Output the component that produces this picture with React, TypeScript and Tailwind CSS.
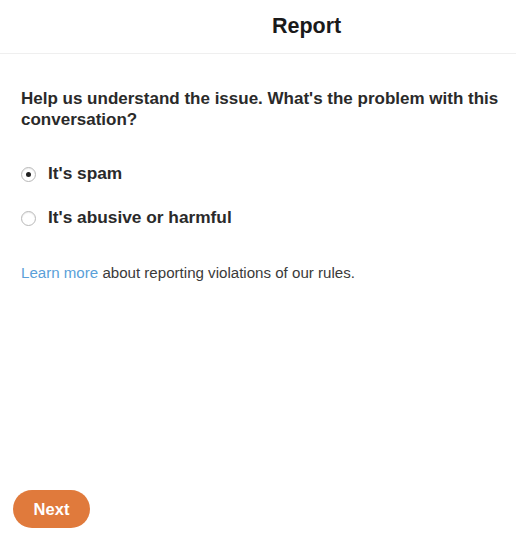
import { useState } from "react";

const options = [
    { id: "spam", label: "It's spam" },
    { id: "abusive", label: "It's abusive or harmful" },
];

export default function App() {
    const [selected, setSelected] = useState("spam");

    return (
        <div className="w-[516px] h-[540px] bg-white flex flex-col text-[#222] font-['Liberation_Sans',Arial,sans-serif]">
            <div className="h-[54px] border-b border-[#efefef] flex items-center pl-[272px]">
                <h1 className="text-[21.5px] font-bold leading-none text-[#1a1a1a]">Report</h1>
            </div>

            <div className="flex-1 flex flex-col pl-[21px] pr-[2px] pt-[34px]">
                <p className="text-[17px] font-bold leading-[21px] text-[#2a2a2a]">
                    Help us understand the issue. What's the problem with this conversation?
                </p>

                <div className="flex flex-col gap-[24px] mt-[34px]">
                    {options.map((opt) => (
                        <label key={opt.id} className="flex items-center gap-[12px] cursor-pointer h-[20px]" onClick={() => setSelected(opt.id)}>
                            <span className="w-[15px] h-[15px] rounded-full border border-[#b8b8b8] bg-white flex items-center justify-center shadow-[inset_0_1px_1px_rgba(0,0,0,0.08)]">
                                {selected === opt.id && <span className="w-[5px] h-[5px] rounded-full bg-[#222]"></span>}
                            </span>
                            <span className="text-[17.3px] font-bold text-[#2a2a2a]">{opt.label}</span>
                        </label>
                    ))}
                </div>

                <p className="text-[15.1px] text-[#3a3a3a] mt-[34px]">
                    <a className="text-[#5a9fd8]">Learn more</a> about reporting violations of our rules.
                </p>
            </div>

            <div className="px-[13px] pb-[12px]">
                <button className="w-[77px] h-[38px] rounded-full bg-[#e07a3c] text-white text-[16.5px] font-bold">Next</button>
            </div>
        </div>
    );
}
